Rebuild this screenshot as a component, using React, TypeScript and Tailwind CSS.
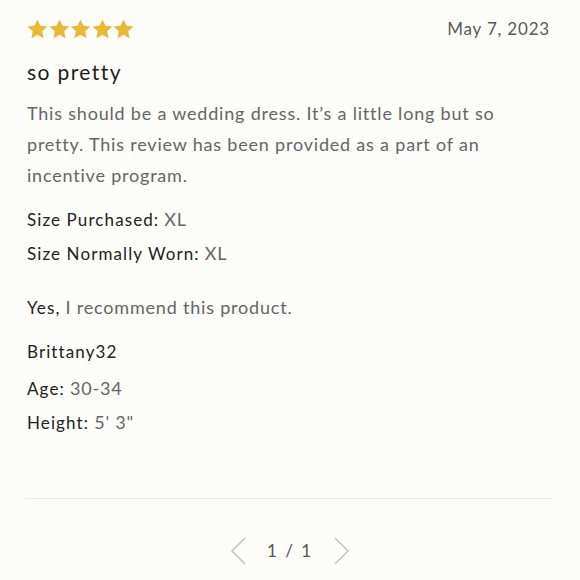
import React from "react";

const Star = () => (
  <svg width="21" height="20" viewBox="0 0 24 23" className="block">
    <path d="M12 0.5l3.4 7.3 7.9 0.9-5.9 5.4 1.6 7.9-7-4-7 4 1.6-7.9L0.7 8.7l7.9-0.9z" fill="#e9b935" />
  </svg>
);

export default function App() {
  return (
    <div
      className="w-[580px] h-[580px] bg-[#fcfcf9] text-[#222] overflow-hidden"
      style={{ fontFamily: "Lato, 'Noto Sans', sans-serif" }}
    >
      <div className="pl-[27px] pr-[30px] pt-[17px]">
        <div className="flex items-center justify-between h-[22px]">
          <div className="flex gap-[0.5px] mt-[2px]">
            <Star />
            <Star />
            <Star />
            <Star />
            <Star />
          </div>
          <div className="text-[17px] text-[#5a5a5a] tracking-[0.8px] mt-[1px]">May 7, 2023</div>
        </div>
        <div className="mt-[21px] text-[21px] leading-[24px] tracking-[1.4px] text-[#1e1e1e]">so pretty</div>
        <p className="mt-[14px] text-[18px] leading-[31px] tracking-[0.8px] text-[#666] pr-[20px]">
          This should be a wedding dress. It’s a little long but so pretty. This review has been provided as a part of an incentive program.
        </p>
        <div className="mt-[12px] text-[17px] leading-[34px] tracking-[0.8px]">
          <div>
            <span className="text-[#222] tracking-[1.1px]">Size Purchased:</span>{" "}
            <span className="text-[#666] text-[18px] leading-none">XL</span>
          </div>
          <div>
            <span className="text-[#222] tracking-[1.1px]">Size Normally Worn:</span>{" "}
            <span className="text-[#666] text-[18px] leading-none">XL</span>
          </div>
        </div>
        <div className="mt-[20px] text-[17px] leading-[34px] tracking-[0.8px]">
          <span className="text-[#222] tracking-[1.1px]">Yes,</span>{" "}
          <span className="text-[#666] text-[18px] leading-none">I recommend this product.</span>
        </div>
        <div className="mt-[10px] text-[17px] leading-[34px] tracking-[1.1px] text-[#222]">Brittany32</div>
        <div className="mt-[3px] text-[17px] leading-[34px] tracking-[0.8px]">
          <span className="text-[#222] tracking-[1.1px]">Age:</span>{" "}
          <span className="text-[#666] text-[18px] leading-none">30-34</span>
        </div>
        <div className="text-[17px] leading-[34px] tracking-[0.8px]">
          <span className="text-[#222] tracking-[1.1px]">Height:</span>{" "}
          <span className="text-[#666] text-[18px] leading-none">5' 3"</span>
        </div>
      </div>
      <div className="ml-[25px] mr-[28px] mt-[58px] border-t border-[#e8e8e4]" />
      <div className="mt-[38px] flex items-center justify-center gap-[20px]">
        <svg width="18" height="28" viewBox="0 0 18 28">
          <path d="M16 1L3 14l13 13" fill="none" stroke="#c4c4c4" strokeWidth="1.6" />
        </svg>
        <div className="text-[17px] text-[#555] tracking-[2px]">1 / 1</div>
        <svg width="18" height="28" viewBox="0 0 18 28">
          <path d="M2 1l13 13L2 27" fill="none" stroke="#c4c4c4" strokeWidth="1.6" />
        </svg>
      </div>
    </div>
  );
}
